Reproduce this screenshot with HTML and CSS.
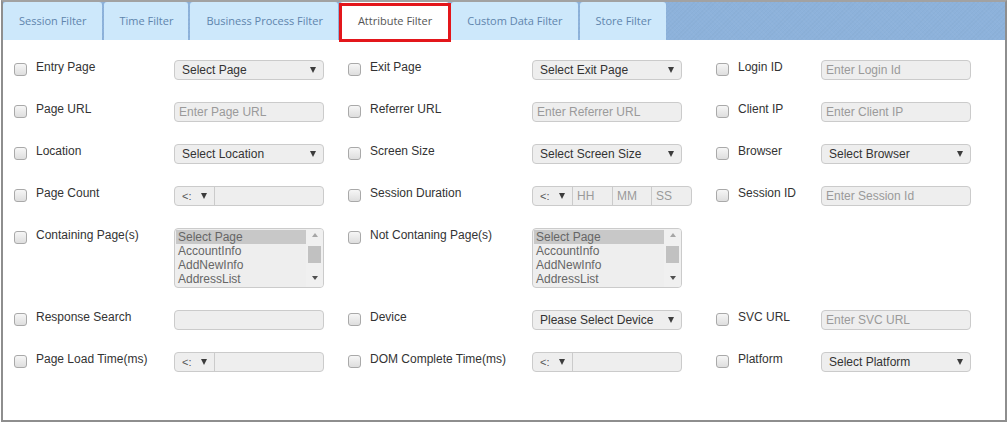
FILE: index.html
```html
<!DOCTYPE html>
<html lang="en">
<head>
  <meta charset="UTF-8">
  <title>Filters</title>
  <link rel="stylesheet" href="styles.css">
</head>
<body>
  <div id="pannello">
    <ul class="schede">
      <li>Session Filter</li>
      <li>Time Filter</li>
      <li>Business Process Filter</li>
      <li class="attiva">Attribute Filter</li>
      <li>Custom Data Filter</li>
      <li>Store Filter</li>
    </ul>

    <div class="filtri">
      <!-- riga 1 -->
      <input type="checkbox" class="spunta"><label>Entry Page</label>
      <div class="cella"><span class="sel"><select><option>Select Page</option></select></span></div>
      <input type="checkbox" class="spunta"><label>Exit Page</label>
      <div class="cella"><span class="sel"><select><option>Select Exit Page</option></select></span></div>
      <input type="checkbox" class="spunta"><label>Login ID</label>
      <div class="cella"><input class="testo" placeholder="Enter Login Id"></div>

      <!-- riga 2 -->
      <input type="checkbox" class="spunta"><label>Page URL</label>
      <div class="cella"><input class="testo" placeholder="Enter Page URL"></div>
      <input type="checkbox" class="spunta"><label>Referrer URL</label>
      <div class="cella"><input class="testo" placeholder="Enter Referrer URL"></div>
      <input type="checkbox" class="spunta"><label>Client IP</label>
      <div class="cella"><input class="testo" placeholder="Enter Client IP"></div>

      <!-- riga 3 -->
      <input type="checkbox" class="spunta"><label>Location</label>
      <div class="cella"><span class="sel"><select><option>Select Location</option></select></span></div>
      <input type="checkbox" class="spunta"><label>Screen Size</label>
      <div class="cella"><span class="sel"><select><option>Select Screen Size</option></select></span></div>
      <input type="checkbox" class="spunta"><label>Browser</label>
      <div class="cella"><span class="sel"><select><option>Select Browser</option></select></span></div>

      <!-- riga 4 -->
      <input type="checkbox" class="spunta"><label>Page Count</label>
      <div class="cella">
        <div class="combo">
          <span class="op"><select><option>&lt;:</option></select></span>
          <input class="valore">
        </div>
      </div>
      <input type="checkbox" class="spunta"><label>Session Duration</label>
      <div class="cella">
        <div class="combo durata">
          <span class="op"><select><option>&lt;:</option></select></span>
          <input class="tempo" placeholder="HH">
          <input class="tempo" placeholder="MM">
          <input class="tempo" placeholder="SS">
        </div>
      </div>
      <input type="checkbox" class="spunta"><label>Session ID</label>
      <div class="cella"><input class="testo" placeholder="Enter Session Id"></div>

      <!-- riga 5 -->
      <input type="checkbox" class="spunta"><label>Containing Page(s)</label>
      <div class="cella">
        <div class="lista">
          <div class="voci">
            <div class="voce scelta">Select Page</div>
            <div class="voce">AccountInfo</div>
            <div class="voce">AddNewInfo</div>
            <div class="voce">AddressList</div>
          </div>
          <div class="barra"><i class="su"></i><i class="cursore"></i><i class="giu"></i></div>
        </div>
      </div>
      <input type="checkbox" class="spunta"><label>Not Contaning Page(s)</label>
      <div class="cella">
        <div class="lista">
          <div class="voci">
            <div class="voce scelta">Select Page</div>
            <div class="voce">AccountInfo</div>
            <div class="voce">AddNewInfo</div>
            <div class="voce">AddressList</div>
          </div>
          <div class="barra"><i class="su"></i><i class="cursore"></i><i class="giu"></i></div>
        </div>
      </div>
      <div class="vuoto"></div>

      <!-- riga 6 -->
      <input type="checkbox" class="spunta"><label>Response Search</label>
      <div class="cella"><input class="testo"></div>
      <input type="checkbox" class="spunta"><label>Device</label>
      <div class="cella"><span class="sel"><select><option>Please Select Device</option></select></span></div>
      <input type="checkbox" class="spunta"><label>SVC URL</label>
      <div class="cella"><input class="testo" placeholder="Enter SVC URL"></div>

      <!-- riga 7 -->
      <input type="checkbox" class="spunta"><label>Page Load Time(ms)</label>
      <div class="cella">
        <div class="combo">
          <span class="op"><select><option>&lt;:</option></select></span>
          <input class="valore">
        </div>
      </div>
      <input type="checkbox" class="spunta"><label>DOM Complete Time(ms)</label>
      <div class="cella">
        <div class="combo">
          <span class="op"><select><option>&lt;:</option></select></span>
          <input class="valore">
        </div>
      </div>
      <input type="checkbox" class="spunta"><label>Platform</label>
      <div class="cella"><span class="sel"><select><option>Select Platform</option></select></span></div>
    </div>
  </div>
</body>
</html>
```

FILE: styles.css
```css
html, body {
  margin: 0;
  padding: 0;
  background: white;
  font-family: "Liberation Sans", Arial, sans-serif;
}

#pannello {
  margin-left: 1px;
  width: 1006px;
  height: 422px;
  box-sizing: border-box;
  border: 2px solid #8e8e8e;
  border-top-color: #a2a2a2;
  overflow: hidden;
}

/* barra delle schede */
.schede {
  margin: 0;
  padding: 0;
  list-style: none;
  display: flex;
  height: 38px;
  background-color: #8db2db;
  background-image:
    repeating-linear-gradient(45deg, rgba(255,255,255,0.025) 0 1px, transparent 1px 3px),
    repeating-linear-gradient(-45deg, rgba(0,0,0,0.02) 0 1px, transparent 1px 3px);
}

.schede li {
  padding: 0 15px 0 16px;
  margin-right: 2px;
  line-height: 38px;
  background: #cde8fb;
  border-radius: 3px 3px 0 0;
  font-family: "Open Sans", sans-serif;
  font-size: 11px;
  color: #5f85ad;
  white-space: nowrap;
}

.schede li:last-child { margin-right: 0; }

.schede li.attiva {
  position: relative;
  background: white;
  color: #555;
  padding: 0 17px 0 18px;
}

.schede li.attiva::after {
  content: "";
  position: absolute;
  top: 1px; bottom: -2px;
  left: -1px; right: -2px;
  border: 3px solid #e3161b;
}

/* griglia dei filtri */
.filtri {
  display: grid;
  grid-template-columns: 22px 138px 174px 22px 162px 184px 22px 83px 150px;
  row-gap: 22px;
  align-items: start;
  padding: 20px 0 0 11px;
}

.vuoto { grid-column: span 3; }

.spunta {
  appearance: none;
  -webkit-appearance: none;
  margin: 3px 0 0 0;
  width: 13px;
  height: 13px;
  box-sizing: border-box;
  border: 1px solid #a9a9a9;
  border-radius: 3px;
  background: linear-gradient(#f6f6f6, #dedede);
}

label {
  font-size: 12px;
  line-height: 14px;
  color: #333;
  white-space: nowrap;
}

.testo, .sel select, .combo {
  width: 150px;
  height: 20px;
  box-sizing: border-box;
  border: 1px solid #cbcbcb;
  border-radius: 4px;
  background: #eeeeee;
  font-family: "Liberation Sans", Arial, sans-serif;
  font-size: 12px;
  color: #333;
}

.testo {
  padding: 0 4px;
  outline: none;
}

input::placeholder { color: #9a9a9a; }

.sel {
  position: relative;
  display: block;
  width: 150px;
}

.sel select, .op select {
  appearance: none;
  -webkit-appearance: none;
  display: block;
  padding: 0 0 0 7px;
  margin: 0;
  outline: none;
}

.sel::after, .op::after {
  content: "";
  position: absolute;
  top: 7px;
  right: 8px;
  border-left: 3px solid transparent;
  border-right: 3px solid transparent;
  border-top: 6px solid #3c3c3c;
}

/* operatore + valore */
.combo {
  display: flex;
  overflow: hidden;
}

.combo.durata { width: 160px; }

.op {
  position: relative;
  width: 39px;
  flex: none;
  border-right: 1px solid #cbcbcb;
}

.op select {
  width: 100%;
  height: 18px;
  border: none;
  background: transparent;
  font-family: "Liberation Sans", Arial, sans-serif;
  font-size: 11px;
  color: #555;
}

.op::after { top: 6px; right: 7px; }

.valore, .tempo {
  flex: 1;
  min-width: 0;
  height: 18px;
  border: none;
  background: transparent;
  padding: 0 4px;
  font-family: "Liberation Sans", Arial, sans-serif;
  font-size: 12px;
  outline: none;
}

.tempo {
  width: 39px;
  flex: none;
  border-left: 1px solid #cbcbcb;
  padding: 0 10px 0 4px;
  box-sizing: border-box;
}

.tempo:first-of-type { border-left: none; }

/* lista a selezione multipla */
.lista {
  display: flex;
  width: 150px;
  height: 60px;
  box-sizing: border-box;
  border: 1px solid #cbcbcb;
  border-radius: 4px;
  background: #eeeeee;
  overflow: hidden;
}

.voci {
  flex: 1;
  padding: 1px 0 0 1px;
}

.voce {
  font-size: 12px;
  line-height: 14px;
  padding: 0 2px;
  color: #666;
  white-space: nowrap;
}

.voce.scelta { background: #c8c8c8; }

.barra {
  width: 17px;
  display: flex;
  flex-direction: column;
  align-items: center;
  background: #f0f0f0;
}

.barra i { display: block; }

.su {
  margin-top: 4px;
  border-left: 3px solid transparent;
  border-right: 3px solid transparent;
  border-bottom: 4px solid #a6a6a6;
}

.cursore {
  margin-top: 9px;
  width: 13px;
  height: 17px;
  background: #c1c1c1;
}

.giu {
  margin-top: auto;
  margin-bottom: 7px;
  border-left: 3px solid transparent;
  border-right: 3px solid transparent;
  border-top: 4px solid #505050;
}
```
